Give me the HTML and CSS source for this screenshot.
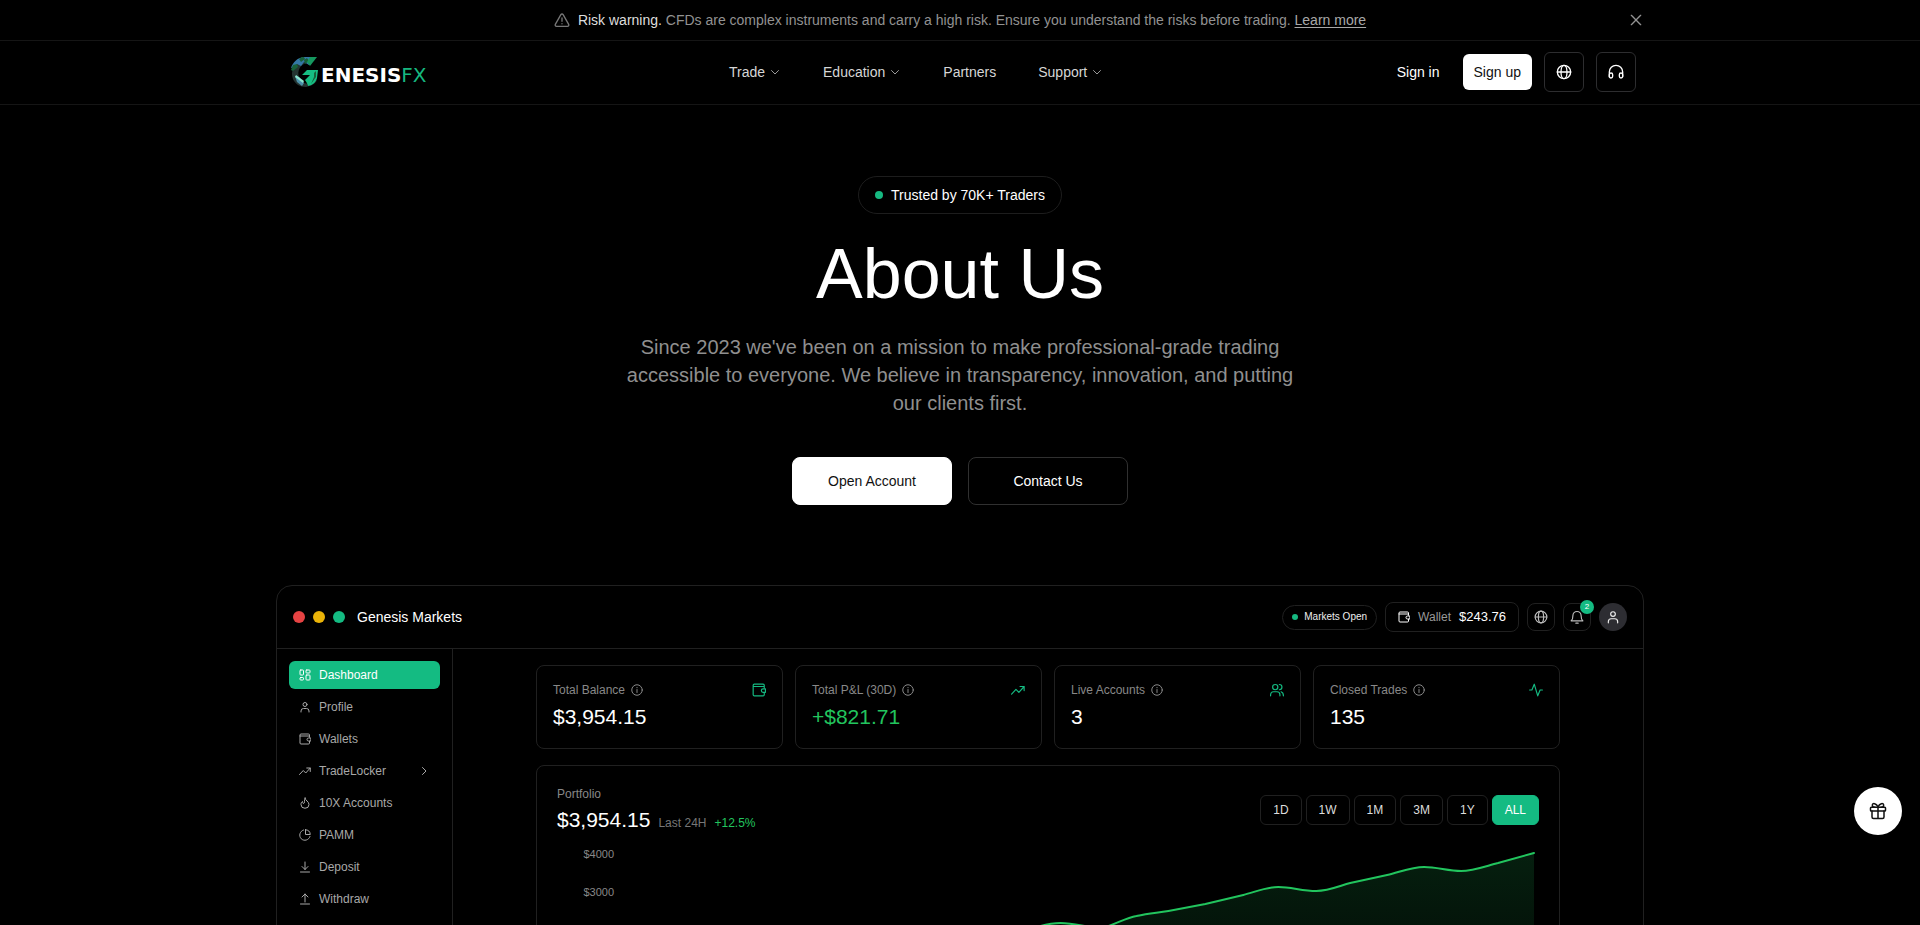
FILE: index.html
```html
<!DOCTYPE html>
<html lang="en">
<head>
<meta charset="utf-8">
<meta name="viewport" content="width=device-width, initial-scale=1">
<title>About Us – GenesisFX</title>
<link rel="stylesheet" href="styles.css">
</head>
<body>
<svg class="sprite" aria-hidden="true">
  <symbol id="chevron" viewBox="0 0 24 24"><path d="M5 9l7 7 7-7"/></symbol>
  <symbol id="chevron-right" viewBox="0 0 24 24"><path d="M9 5l7 7-7 7"/></symbol>
  <symbol id="globe" viewBox="0 0 24 24"><circle cx="12" cy="12" r="10"/><ellipse cx="12" cy="12" rx="4.500" ry="10"/><path d="M2 12h20"/></symbol>
  <symbol id="headphones" viewBox="0 0 24 24"><path d="M2 19v-7a10 10 0 0 1 20 0v7"/><path d="M22 18.500a2.500 2.500 0 0 1-5 0V16a2.500 2.500 0 0 1 5 0zM2 18.500a2.500 2.500 0 0 0 5 0V16a2.500 2.500 0 0 0-5 0z"/></symbol>
  <symbol id="user" viewBox="0 0 24 24"><circle cx="12" cy="7" r="4"/><path d="M4 22v-2a5 5 0 0 1 5-5h6a5 5 0 0 1 5 5v2"/></symbol>
  <symbol id="wallet" viewBox="0 0 24 24"><path d="M21 8.500V4a2 2 0 0 0-2-2H4a2 2 0 0 0-2 2v16a2 2 0 0 0 2 2h15a2 2 0 0 0 2-2v-3.500M2 6h19"/><path d="M23 10h-4a3 3 0 0 0 0 6h4z"/></symbol>
  <symbol id="trend" viewBox="0 0 24 24"><path d="M1 19l7.500-8 5 5L22.500 6M15.500 6h7v7"/></symbol>
  <symbol id="info" viewBox="0 0 24 24"><circle cx="12" cy="12" r="10.500"/><path d="M12 11v6M12 7v.5"/></symbol>
</svg>

<div class="notice">
  <div class="notice-text">
    <svg class="i16" viewBox="0 0 24 24"><path d="M10.300 4L2 18.500A2 2 0 0 0 3.700 21.500h16.600a2 2 0 0 0 1.700-3L13.700 4a2 2 0 0 0-3.400 0zM12 9v5M12 17.500v.2"/></svg>
    <p><strong>Risk warning.</strong> CFDs are complex instruments and carry a high risk. Ensure you understand the risks before trading. <a href="#risk">Learn more</a></p>
  </div>
  <button class="notice-close" type="button" aria-label="Close"><svg class="i16" viewBox="0 0 24 24"><path d="M5 5l14 14M19 5L5 19"/></svg></button>
</div>

<header class="header">
  <div class="header-inner">
    <a class="logo" href="#home" aria-label="GenesisFX">
      <svg class="logo-mark" viewBox="0 0 32 30">
        <path fill="#243431" d="M13 4C5 7 1 14 4 22c2 5 7 8 13 8 5-1 9-3 11-7l-6 2c-5 3-10 1-12-5C8 14 11 8 17 6z"/>
        <path fill="#3477a5" d="M26 0H15C8 1 4 5 2 11l4-1 2-3 4 2 3-4 5 3z"/>
        <path fill="#17613a" d="M13 0l-3 2 2 3 4-3-1-2zM4 8l4-1 1 3-5 4-2-1zM15 3l3-2 2 3-4 3z"/>
        <path fill="#15985f" d="M28 0l-7 9-3-4 3-5z"/>
        <path fill="#16bd82" d="M29 13H18l-5 5h8l-5 5c2 3 3 5 3 6 5-1 8-4 9-8z"/>
        <path fill="#17613a" d="M25 16l2-2v6l-5 7 3-7z"/>
        <path fill="#4c91aa" d="M6 19l4 1 5 6-2 3-5-4z"/>
        <path fill="#8ce7cf" d="M7 18l8 6-1 2-8-6z"/>
      </svg>
      <span class="logo-text">ENESIS<b>FX</b></span>
    </a>
    <nav class="nav">
      <a href="#trade">Trade <svg class="i12"><use href="#chevron"/></svg></a>
      <a href="#education">Education <svg class="i12"><use href="#chevron"/></svg></a>
      <a href="#partners">Partners</a>
      <a href="#support">Support <svg class="i12"><use href="#chevron"/></svg></a>
    </nav>
    <div class="actions">
      <a class="sign-in" href="#signin">Sign in</a>
      <a class="sign-up" href="#signup">Sign up</a>
      <button class="square" type="button" aria-label="Language"><svg class="i16"><use href="#globe"/></svg></button>
      <button class="square" type="button" aria-label="Contact support"><svg class="i16"><use href="#headphones"/></svg></button>
    </div>
  </div>
</header>

<main>
  <section class="hero">
    <p class="trusted"><span class="dot"></span>Trusted by 70K+ Traders</p>
    <h1>About Us</h1>
    <p class="lead">Since 2023 we've been on a mission to make professional-grade trading accessible to everyone. We believe in transparency, innovation, and putting our clients first.</p>
    <div class="cta">
      <a class="cta-btn cta-primary" href="#open">Open Account</a>
      <a class="cta-btn" href="#contact">Contact Us</a>
    </div>
  </section>

  <section class="window">
    <div class="titlebar">
      <span class="light red"></span><span class="light yellow"></span><span class="light green"></span>
      <h2>Genesis Markets</h2>
      <div class="tools">
        <span class="market"><span class="dot small"></span>Markets Open</span>
        <button class="wallet" type="button"><svg class="i12"><use href="#wallet"/></svg><span class="muted">Wallet</span><span class="amount">$243.76</span></button>
        <button class="tool" type="button" aria-label="Language"><svg class="i14"><use href="#globe"/></svg></button>
        <button class="tool" type="button" aria-label="Notifications"><svg class="i14" viewBox="0 0 24 24"><path d="M2 18.500c2-1.500 3-4 3-9a7 7 0 0 1 14 0c0 5 1 7.500 3 9zM10 22.500h4"/></svg><span class="badge">2</span></button>
        <button class="tool avatar" type="button" aria-label="Account"><svg class="i14"><use href="#user"/></svg></button>
      </div>
    </div>
    <div class="body">
      <nav class="side">
        <a class="active" href="#dashboard"><svg class="i12" viewBox="0 0 24 24"><rect x="2" y="2" width="7" height="10" rx="1.500"/><rect x="14" y="2" width="8" height="6" rx="1.500"/><rect x="2" y="17" width="7" height="5" rx="1.500"/><rect x="14" y="12" width="8" height="10" rx="1.500"/></svg>Dashboard</a>
        <a href="#profile"><svg class="i12"><use href="#user"/></svg>Profile</a>
        <a href="#wallets"><svg class="i12"><use href="#wallet"/></svg>Wallets</a>
        <a href="#tradelocker"><svg class="i12"><use href="#trend"/></svg>TradeLocker<svg class="i12 more"><use href="#chevron-right"/></svg></a>
        <a href="#accounts"><svg class="i12" viewBox="0 0 24 24"><path d="M12 2c0 5 8 7 8 13a8 7.500 0 0 1-16 0c0-3 1-5 3-6 0 3 1 4 2 4 3 0 1-6 3-11z"/></svg>10X Accounts</a>
        <a href="#pamm"><svg class="i12" viewBox="0 0 24 24"><path d="M9 2a10.500 10.500 0 1 0 13 13M13 1.500V11h9.500A10 10 0 0 0 13 1.500z"/></svg>PAMM</a>
        <a href="#deposit"><svg class="i12" viewBox="0 0 24 24"><path d="M12 2v15M6 11l6 6 6-6M3 22h18"/></svg>Deposit</a>
        <a href="#withdraw"><svg class="i12" viewBox="0 0 24 24"><path d="M12 18V2M6 8l6-6 6 6M3 22h18"/></svg>Withdraw</a>
      </nav>
      <div class="content">
        <div class="stats">
          <article class="card"><h3>Total Balance <svg class="i12"><use href="#info"/></svg><svg class="i14 mark"><use href="#wallet"/></svg></h3><p class="value">$3,954.15</p></article>
          <article class="card"><h3>Total P&amp;L (30D) <svg class="i12"><use href="#info"/></svg><svg class="i14 mark"><use href="#trend"/></svg></h3><p class="value up">+$821.71</p></article>
          <article class="card"><h3>Live Accounts <svg class="i12"><use href="#info"/></svg><svg class="i14 mark" viewBox="0 0 24 24"><circle cx="9" cy="7" r="4.500"/><path d="M1 22v-2c0-3 2-5 5-5h6c3 0 5 2 5 5v2M16 2.500a4.500 4.500 0 0 1 0 9M19 15c3 1 4 3 4 7"/></svg></h3><p class="value">3</p></article>
          <article class="card"><h3>Closed Trades <svg class="i12"><use href="#info"/></svg><svg class="i14 mark" viewBox="0 0 24 24"><path d="M1 12h4l4-10 6 20 4-10h4"/></svg></h3><p class="value">135</p></article>
        </div>
        <section class="portfolio">
          <div class="portfolio-head">
            <div>
              <h3>Portfolio</h3>
              <p class="balance"><span class="value">$3,954.15</span><span class="period">Last 24H</span><span class="up">+12.5%</span></p>
            </div>
            <div class="ranges">
              <button type="button">1D</button><button type="button">1W</button><button type="button">1M</button><button type="button">3M</button><button type="button">1Y</button><button class="active" type="button">ALL</button>
            </div>
          </div>
          <div class="chart">
            <div class="axis"><span>$4000</span><span>$3000</span></div>
            <svg class="plot" viewBox="0 0 913 160" preserveAspectRatio="none">
              <defs><linearGradient id="area" x1="0" y1="0" x2="0" y2="1"><stop offset="0" stop-color="#22c55e" stop-opacity=".16"/><stop offset="1" stop-color="#22c55e" stop-opacity=".04"/></linearGradient></defs>
              <path class="fill" fill="url(#area)" d="M0 132L219 110L365 90C395 82 420 71 439 71C455 71 465 76 480 76C494 73 503 66 515 64C528 61 535 61 547 59L584 52L622 43C634 40 645 35 657 35C670 35 681 39 695 39C707 39 718 34 729 31L766 23C779 20 790 15 803 15C816 15 827 19 840 19C852 19 865 14 877 11L913 1V160H0Z"/>
              <path class="line" d="M0 132L219 110L365 90C395 82 420 71 439 71C455 71 465 76 480 76C494 73 503 66 515 64C528 61 535 61 547 59L584 52L622 43C634 40 645 35 657 35C670 35 681 39 695 39C707 39 718 34 729 31L766 23C779 20 790 15 803 15C816 15 827 19 840 19C852 19 865 14 877 11L913 1"/>
            </svg>
          </div>
        </section>
      </div>
    </div>
  </section>
</main>

<button class="gift" type="button" aria-label="Rewards"><svg class="i18" viewBox="0 0 24 24"><rect x="2" y="7" width="20" height="5" rx="1"/><path d="M4 12v8a2 2 0 0 0 2 2h12a2 2 0 0 0 2-2v-8M12 7v15M12 7C10 1 4 1 4.500 4.500 4.500 6 6 7 8 7M12 7c2-6 8-6 7.500-2.500C19.500 6 18 7 16 7"/></svg></button>
</body>
</html>
```
FILE: styles.css
```css
* { box-sizing: border-box; }
body {
  margin: 0;
  background: #000;
  color: #fff;
  font: 14px/20px "Liberation Sans", Arial, sans-serif;
  overflow-x: hidden;
  scrollbar-width: none;
}
h1, h2, h3, p { margin: 0; font-weight: 400; }
a { color: inherit; text-decoration: none; }
button { font: inherit; color: inherit; background: none; border: 0; padding: 0; cursor: pointer; }
svg { fill: none; stroke: currentColor; stroke-width: 2; stroke-linecap: round; stroke-linejoin: round; flex: none; }
.sprite { display: none; }
.i12 { width: 12px; height: 12px; }
.i14 { width: 14px; height: 14px; }
.i16 { width: 16px; height: 16px; }
.i18 { width: 18px; height: 18px; }

.notice {
  display: grid;
  grid-template-columns: 1fr auto 1fr;
  align-items: center;
  min-height: 41px;
  padding: 0 max(16px, calc(50% - 684px));
  border-bottom: 1px solid #151515;
  color: #929292;
}
.notice-text { grid-column: 2; display: flex; align-items: center; gap: 8px; }
.notice-text svg { color: #777; }
.notice strong { font-weight: 400; color: #dedede; }
.notice a { text-decoration: underline; text-underline-offset: 2px; color: #a8a8a8; }
.notice-close { justify-self: end; display: flex; color: #929292; }

.header { border-bottom: 1px solid #151515; }
.header-inner {
  display: flex;
  justify-content: space-between;
  align-items: center;
  height: 63px;
  max-width: 1400px;
  margin: 0 auto;
  padding: 0 24px 2px;
}
.logo { display: flex; align-items: center; padding: 0 20px 0 5px; }
.logo-mark { width: 32px; height: 30px; stroke: none; }
.logo-text { font: bold 20px/20px "DejaVu Sans", sans-serif; padding-top: 6px; }
.logo-text b { color: #16b77f; font-weight: 400; }
.nav { display: flex; gap: 42px; color: #d6d6d6; }
.nav a { display: flex; align-items: center; gap: 4px; }
.nav svg { color: #999; }
.actions { display: flex; align-items: center; gap: 12px; }
.sign-in, .sign-up { padding: 8px 11px; }
.sign-up { background: #fff; color: #111; border-radius: 6px; }
.square { display: grid; place-items: center; width: 40px; height: 40px; border: 1px solid #2d2d2f; border-radius: 6px; }

.hero { display: flex; flex-direction: column; align-items: center; padding: 71px 16px 80px; text-align: center; }
.trusted { display: flex; align-items: center; gap: 8px; padding: 8px 16px; border: 1px solid #1d1d1d; border-radius: 20px; }
.dot { width: 8px; height: 8px; border-radius: 50%; background: #16b981; }
.small { width: 6px; height: 6px; }
h1 { font-size: 70px; line-height: 72px; margin-top: 24px; }
.lead { max-width: 672px; margin-top: 23px; font-size: 20px; line-height: 28px; color: #8f8f8f; }
.cta { display: flex; gap: 16px; margin-top: 40px; }
.cta-btn { display: grid; place-items: center; width: 160px; height: 48px; border: 1px solid #303030; border-radius: 8px; }
.cta-primary { background: #fff; border-color: #fff; color: #111; }

.window {
  max-width: 1368px;
  margin: 0 auto;
  border: 1px solid #202020;
  border-radius: 16px;
}
.titlebar { display: flex; align-items: center; gap: 8px; height: 63px; padding: 0 16px; border-bottom: 1px solid #202020; }
.light { width: 12px; height: 12px; border-radius: 50%; }
.red { background: #e64343; }
.yellow { background: #eab308; }
.green { background: #14bb82; }
h2 { margin-left: 4px; font-size: 14px; }
.tools { display: flex; align-items: center; gap: 8px; margin-left: auto; font-size: 12px; }
.tools button, .market { border: 1px solid #202020; }
.market { display: flex; align-items: center; gap: 6px; height: 25px; padding: 0 9px; border-radius: 13px; font-size: 10px; color: #eee; }
.wallet { display: flex; align-items: center; gap: 8px; height: 30px; padding: 0 12px; border-radius: 8px; }
.muted { color: #999; }
.amount { font-size: 13px; }
.tool { position: relative; display: grid; place-items: center; width: 28px; height: 28px; border-radius: 8px; color: #bbb; }
.badge { position: absolute; top: -4px; right: -4px; width: 14px; height: 14px; border-radius: 50%; background: #14bb82; color: #fff; font-size: 8px; line-height: 14px; }
.tools .avatar { border: 0; border-radius: 50%; background: #2d2d32; color: #eee; }

.body { display: flex; }
.side { display: flex; flex-direction: column; gap: 4px; width: 176px; padding: 12px; border-right: 1px solid #202020; font-size: 12px; color: #a8a8a8; }
.side a { display: flex; align-items: center; gap: 8px; height: 28px; padding: 0 10px; border-radius: 6px; }
.side .active, .ranges .active { background: #14bb82; color: #fff; }
.side .more { margin-left: auto; }
.content { flex: 1; min-width: 0; max-width: 1056px; margin: 0 auto; padding: 16px; }
.stats { display: grid; grid-template-columns: repeat(4, 1fr); gap: 12px; }
.card, .portfolio { border: 1px solid #202020; border-radius: 8px; }
.card { height: 84px; padding: 16px; }
h3 { display: flex; align-items: center; gap: 6px; font-size: 12px; line-height: 16px; color: #888; }
.mark { margin-left: auto; color: #14bb82; }
.value { font-size: 21px; line-height: 28px; }
.card .value { margin-top: 5px; }
.up { color: #22c55e; }
.portfolio { margin-top: 16px; padding: 20px; }
.portfolio-head { display: flex; justify-content: space-between; align-items: center; }
.balance { display: flex; align-items: baseline; gap: 8px; font-size: 12px; margin-top: 4px; }
.period { color: #777; }
.ranges { display: flex; gap: 4px; font-size: 12px; }
.ranges button { height: 30px; padding: 0 12px; border: 1px solid #202020; border-radius: 6px; color: #ddd; }
.ranges .active { border-color: #14bb82; }
.chart { display: flex; gap: 8px; padding: 10px 5px 0 24px; }
.axis { display: flex; flex-direction: column; align-items: flex-end; width: 33px; gap: 18px; font-size: 11px; color: #888; }
.plot { flex: 1; min-width: 0; height: 160px; margin-top: 8px; overflow: visible; }
.fill { stroke: none; }
.line { stroke: #22c55e; }

.gift { position: fixed; right: 18px; bottom: 90px; display: grid; place-items: center; width: 48px; height: 48px; border-radius: 50%; background: #fff; color: #111; }
```
